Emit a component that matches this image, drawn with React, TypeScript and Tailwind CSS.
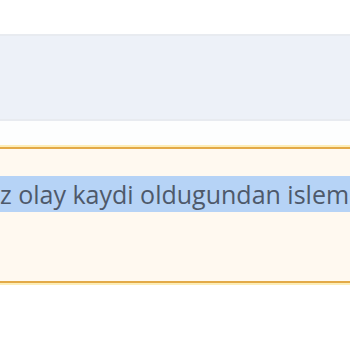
import React from 'react';

export default function App() {
  return (
    <div className="w-[350px] h-[350px] bg-white overflow-hidden" style={{ fontFamily: '"Open Sans", "Noto Sans", sans-serif' }}>
      <div className="h-[34px]" />
      <div className="h-[87px] bg-[#edf1f8] border-y-2 border-[#e8ebf0]" />
      <div className="h-[26px] bg-[#fdfefe]" />
      <div className="h-[136px] bg-[#fff9f0] border-y-2 border-[#e3aa48] shadow-[0_0_0_2px_#fdeeb8]">
        <div className="pt-[27px]">
          <div className="h-[36px] bg-[#b6d3f6] flex items-center whitespace-nowrap overflow-hidden">
            <span className="text-[25px] leading-[36px] text-[#4e596a]">z olay kaydi oldugundan islem</span>
          </div>
        </div>
      </div>
    </div>
  );
}
